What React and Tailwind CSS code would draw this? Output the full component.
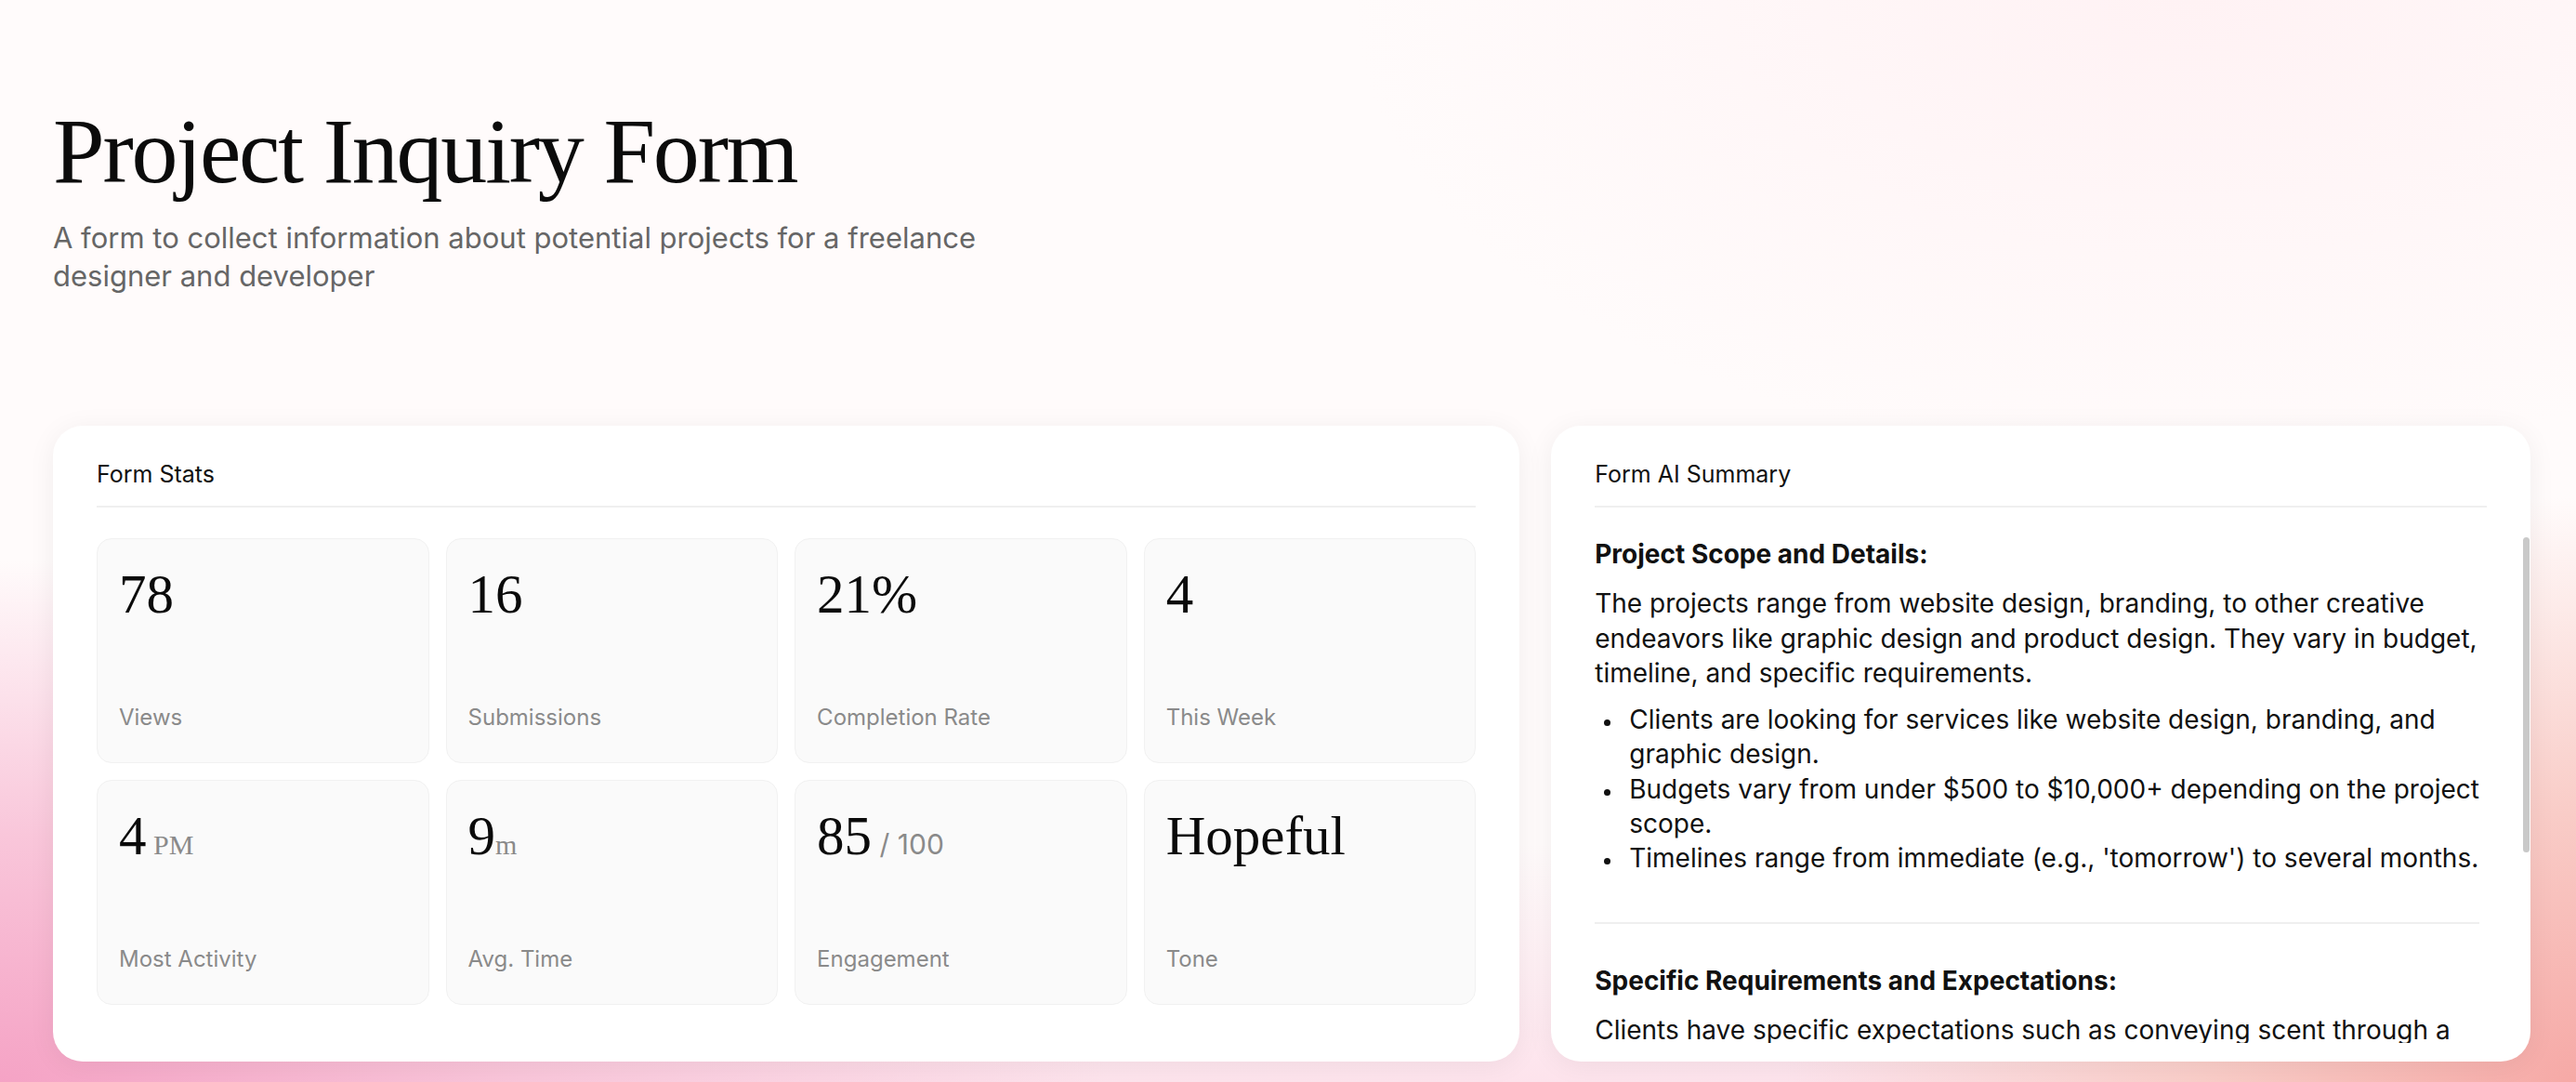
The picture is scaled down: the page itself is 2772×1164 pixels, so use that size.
import React from 'react'

const stats = [
  { value: '78', label: 'Views' },
  { value: '16', label: 'Submissions' },
  { value: '21%', label: 'Completion Rate' },
  { value: '4', label: 'This Week' },
  { value: '4', suffix: ' PM', kind: 'serif', label: 'Most Activity' },
  { value: '9', suffix: 'm', kind: 'serif', label: 'Avg. Time' },
  { value: '85', suffix: ' / 100', kind: 'sans', label: 'Engagement' },
  { value: 'Hopeful', label: 'Tone' },
]

function StatCard({ value, suffix, kind, label }) {
  return (
    <div className="flex h-[242px] flex-col justify-between rounded-[16px] border border-[#f1f1f1] bg-[#fafafa] px-[23px] pt-[30px] pb-[33px]">
      <div className="whitespace-pre font-['Liberation_Serif',serif] text-[59px] leading-none text-[#0a0a0a]">
        {value}
        {suffix && kind === 'serif' && (
          <span className="font-['Liberation_Serif',serif] text-[30px] text-[#8a8a8a]">{suffix}</span>
        )}
        {suffix && kind === 'sans' && (
          <span className="font-['Inter',sans-serif] text-[30px] text-[#8a8a8a]">{suffix}</span>
        )}
      </div>
      <div className="font-['Inter',sans-serif] text-[24px] leading-[30px] text-[#8a8a8a]">{label}</div>
    </div>
  )
}

function PanelHeader({ title }) {
  return (
    <div className="px-[47px] pt-[34px]">
      <div className="border-b-2 border-[#efefef] pb-[16px] font-['Inter',sans-serif] text-[25px] leading-[36px] text-[#111]">
        {title}
      </div>
    </div>
  )
}

function Line({ children }) {
  return <span className="block whitespace-nowrap">{children}</span>
}

function Bullet({ children }) {
  return (
    <li className="flex">
      <span className="w-[37px] shrink-0">
        <span className="ml-[10px] mt-[18px] block size-[7px] rounded-full bg-[#111]" />
      </span>
      <span>{children}</span>
    </li>
  )
}

export default function App() {
  return (
    <div className="min-h-screen bg-[#fffbfb] bg-[radial-gradient(1400px_660px_at_0%_100%,#f5a3c5_0%,#f9c6da_40%,rgba(252,228,238,0)_85%),radial-gradient(1000px_740px_at_100%_100%,#f6a9a6_0%,#f9cdc8_40%,rgba(253,235,233,0)_85%),linear-gradient(to_top,#fde3ec_0%,rgba(255,251,251,0)_22%),radial-gradient(900px_500px_at_85%_0%,#fff2f4_0%,rgba(255,242,244,0)_100%)] pl-[57px] pr-[49px] pt-[113px] pb-[22px]">
      <h1 className="font-['Liberation_Serif',serif] text-[100px] leading-[100px] tracking-[-0.022em] text-[#0b0b0b]">
        Project Inquiry Form
      </h1>
      <p className="mt-[22px] font-['Inter',sans-serif] text-[31px] leading-[41px] text-[#666]">
        A form to collect information about potential projects for a freelance
        <br />
        designer and developer
      </p>

      <div className="mt-[141px] grid grid-cols-[3fr_2fr] gap-[34px]">
        <section className="h-[684px] rounded-[32px] bg-white shadow-[0_4px_30px_rgba(0,0,0,0.06)]">
          <PanelHeader title="Form Stats" />
          <div className="mt-[33px] grid grid-cols-4 gap-[18px] px-[47px]">
            {stats.map((s, i) => (
              <StatCard key={i} {...s} />
            ))}
          </div>
        </section>

        <section className="relative h-[684px] rounded-[32px] bg-white shadow-[0_4px_30px_rgba(0,0,0,0.06)]">
          <PanelHeader title="Form AI Summary" />
          <div className="mt-[32px] h-[544px] overflow-hidden pl-[47px] pr-[55px] font-['Inter',sans-serif] text-[28px] leading-[37.3px] text-[#111]">
            <h3 className="font-bold">Project Scope and Details:</h3>
            <p className="mt-[16px]">
              <Line>The projects range from website design, branding, to other creative</Line>
              <Line>endeavors like graphic design and product design. They vary in budget,</Line>
              <Line>timeline, and specific requirements.</Line>
            </p>
            <ul className="mt-[13px]">
              <Bullet>
                <Line>Clients are looking for services like website design, branding, and</Line>
                <Line>graphic design.</Line>
              </Bullet>
              <Bullet>
                <Line>Budgets vary from under $500 to $10,000+ depending on the project</Line>
                <Line>scope.</Line>
              </Bullet>
              <Bullet>
                <Line>Timelines range from immediate (e.g., 'tomorrow') to several months.</Line>
              </Bullet>
            </ul>
            <div className="mt-[49px] h-[2px] bg-[#efefef]" />
            <h3 className="mt-[43px] font-bold">Specific Requirements and Expectations:</h3>
            <p className="mt-[16px]">
              <Line>Clients have specific expectations such as conveying scent through a</Line>
            </p>
          </div>
          <div className="absolute right-[1px] top-[120px] h-[339px] w-[7px] rounded-full bg-[#c9c9c9]" />
        </section>
      </div>
    </div>
  )
}
